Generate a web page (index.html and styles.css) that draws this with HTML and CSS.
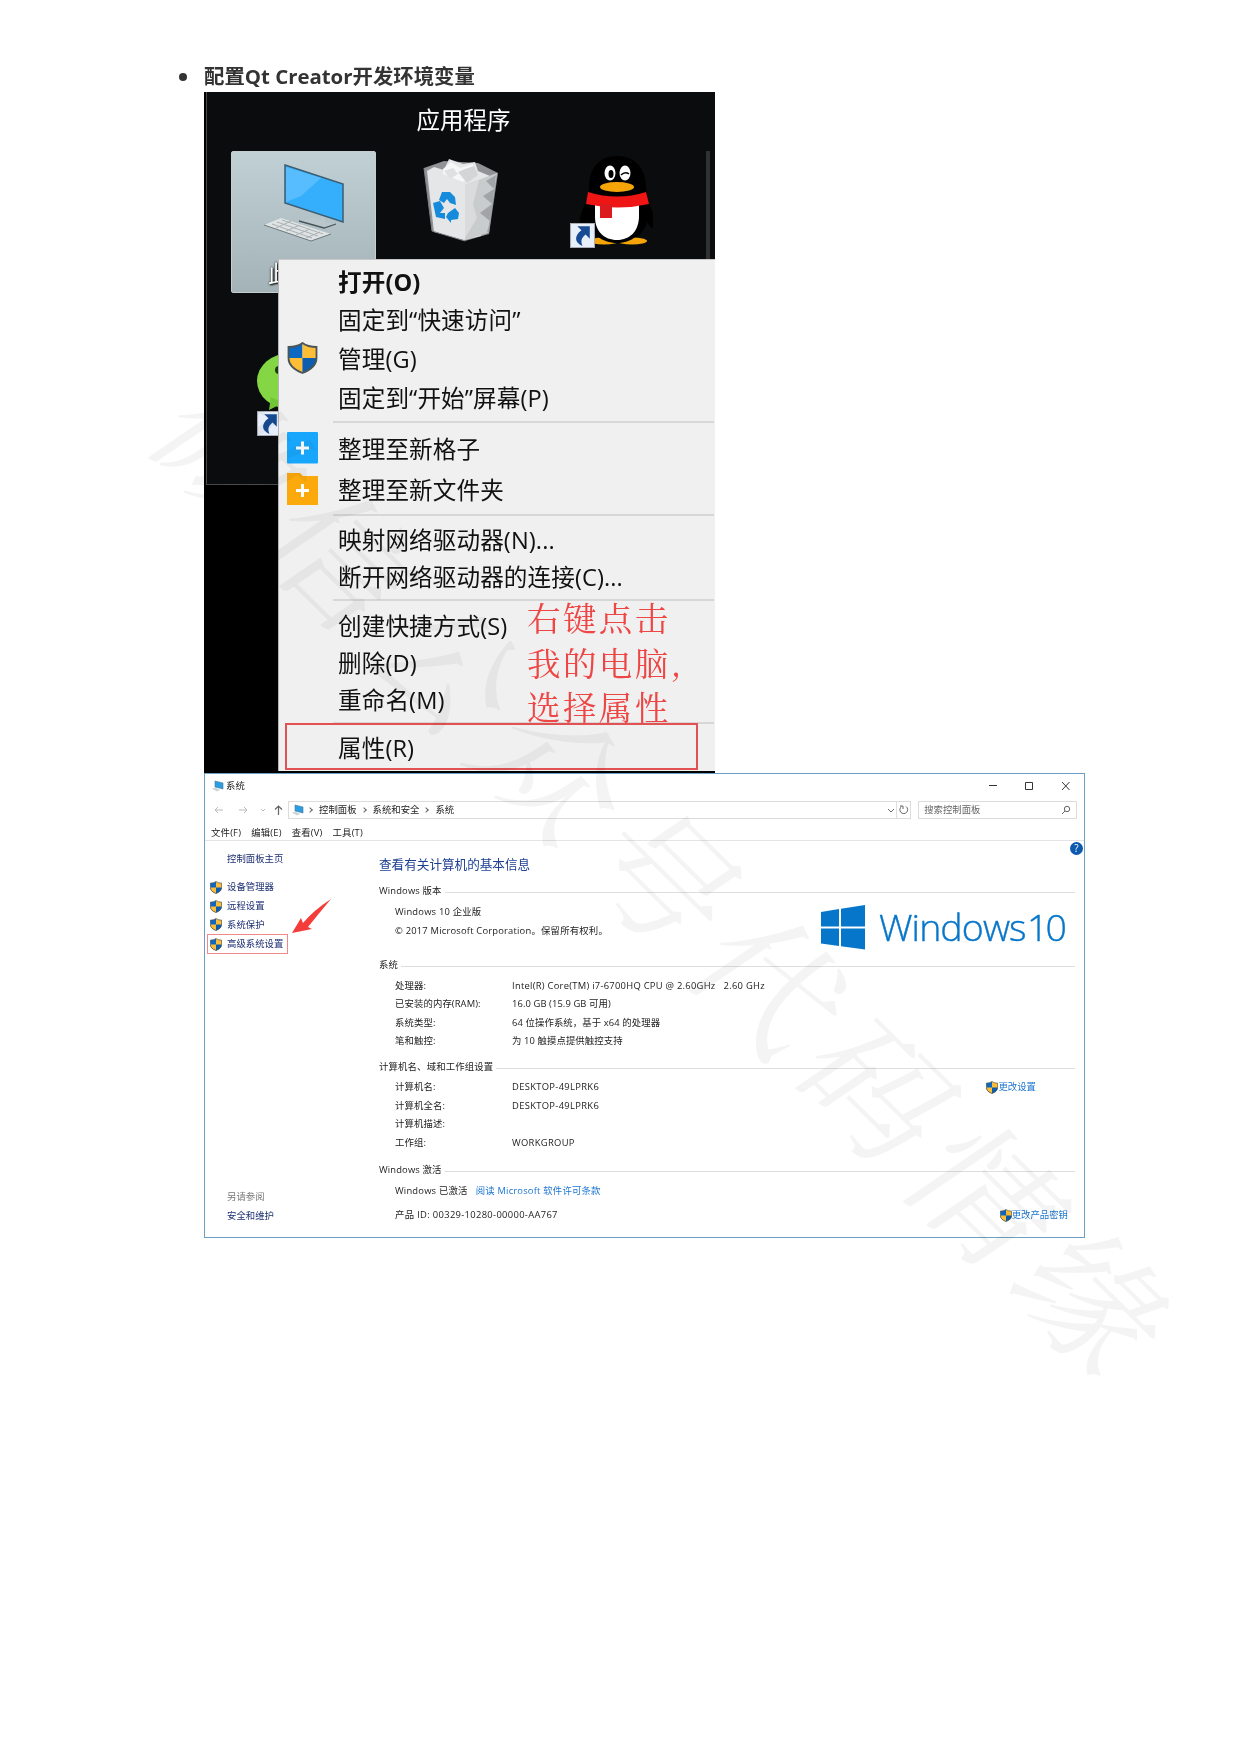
FILE: index.html
```html
<!DOCTYPE html>
<html lang="zh-CN">
<head>
<meta charset="utf-8">
<title>配置Qt Creator开发环境变量</title>
<link rel="stylesheet" href="styles.css">
</head>
<body>
<svg width="0" height="0" class="defs">
  <symbol id="shield" viewBox="0 0 30 32">
    <path d="M15 1C11 4 6 5 1 5v11c0 8 6 12 14 15z" fill="#0c68c0"/>
    <path d="M15 1c4 3 9 4 14 4v11c0 8-6 12-14 15z" fill="#fdbd36"/>
    <path d="M1 16h14v15C7 28 1 24 1 16z" fill="#fdbd36"/>
    <path d="M15 16h14c0 8-6 12-14 15z" fill="#0c5db0"/>
    <path d="M15 1C11 4 6 5 1 5v11c0 8 6 12 14 15 8-3 14-7 14-15V5c-5 0-10-1-14-4z" fill="none" stroke="#4b5557" stroke-width="1.8"/>
  </symbol>
  <symbol id="shortcut" viewBox="0 0 24 24">
    <path d="M0 0h24v24H0z" fill="#e9effa"/><path d="M.5.5h23v23H.5z" fill="none" stroke="#a9adb5"/>
    <path d="M7 3h12v12l-4-4c-4 3-5 6-3 11-8-3-8-10-1-15z" fill="#174b94"/>
  </symbol>
  <symbol id="pc" viewBox="0 0 12 12">
    <path d="M3 1l8 2v6L3 7z" fill="#2c9de0" stroke="#447b9d" stroke-width=".6"/><path d="M0 8.5l3-1 5 2.5-3 1.5z" fill="#c9d3d8"/>
  </symbol>
</svg>

<main class="page">
  <h1 class="heading"><span class="dot"></span>配置Qt Creator开发环境变量</h1>

  <section class="desktop">
    <div class="fence"><div class="fence-title">应用程序</div></div>
    <div class="tile"><span class="tile-name">此电脑</span></div>
    <svg class="item computer" viewBox="0 0 82 82" width="82" height="82">
      <path d="M21 3l58 19v38L21 41z" fill="#35aefb" stroke="#3c5d72" stroke-width="1.5"/>
      <path d="M22 5l35 11-20 18-15 6z" fill="#58bdff"/>
      <path d="M57 55l4 1v4l11 2-12 4-25-7 15-3 7 2z" fill="#b9c7cb"/><path d="M35 59l25 7 12-4" stroke="#48545a" stroke-width="1.3" fill="none"/>
      <path d="M0 63l17-7 50 16-20 7z" fill="#dfe3e4"/><path d="M0 63l47 16 20-7" stroke="#6d797e" fill="none"/>
      <path d="M8 62l40 14M13 60l41 14M18 58l41 14M12 66l15-7M22 69l14-6M32 73l14-6M42 76l14-6" stroke="#a9b1b4" fill="none"/>
    </svg>
    <svg class="item bin" viewBox="0 0 76 84" width="76" height="84">
      <path d="M1 10l20-7 34 2 20 10-9 61-24 7-33-10z" fill="#8f9396"/>
      <path d="M4 13l7-4 10 3 5-11 14 5 12-2 3 9 12 5-9 60-17 4-30-8z" fill="#e5e6e7"/>
      <path d="M20 11l8-7 9 6 13-4 3 10-13 8-20-8z" fill="#f7f7f7"/>
      <path d="M35 14l9 11 11-8-4-9-9 3z" fill="#d3d5d7"/><path d="M21 13l6 8 8-5-5-6z" fill="#dfe0e2"/>
      <path d="M42 27l32-12-9 60-23 7z" fill="#c9cccd"/>
      <path d="M73 17l-10 6 8 8-11 7 9 8-12 9 10 8-3 11 2 1z" fill="#a1a5a8"/>
      <path d="M42 27l14-5-6 24 4 14-12 20z" fill="#d9dbdc"/>
      <path d="M1 10l8 63 33 10" stroke="#7f8386" fill="none"/>
      <path d="M16 42l3-8h8l5 5 1 8-6-2-3-4-3 4zM10 45l7-2 4 7-4 5h5v6l-9-2zM25 55l7-5 4 5-1 6-7 1v3l-5-6z" fill="#168bdb"/>
    </svg>
    <svg class="item penguin" viewBox="0 0 86 94" width="86" height="94">
      <path d="M22 33C22 12 33 1 50 1s29 11 29 32l1 12c6 10 9 20 7 28-3 0-5-2-7-6-4 14-14 20-29 20S25 81 20 66c-2 5-4 6-7 5-1-9 2-18 8-26z" fill="#000"/>
      <ellipse cx="37" cy="86" rx="15" ry="3.500" fill="#f6a509"/><ellipse cx="65" cy="86" rx="15" ry="3.500" fill="#f6a509"/>
      <path d="M22 60c0 19 13 28 28 28s27-9 27-27V45H22z" fill="#000"/>
      <path d="M28 49h44v12c0 15-9 24-22 24S28 76 28 62z" fill="#fff"/>
      <ellipse cx="43" cy="18" rx="5.500" ry="7.500" fill="#fff"/><ellipse cx="58" cy="18" rx="5.500" ry="7.500" fill="#fff"/>
      <ellipse cx="44" cy="19" rx="2.500" ry="4"/><path d="M54 20q4-4 8-1" stroke="#000" stroke-width="1.500" fill="none"/>
      <ellipse cx="50" cy="32" rx="17" ry="5" fill="#f6a509"/>
      <path d="M21 37q29 9 58 0l3 12q-31 7-63 0z" fill="#f01515"/><path d="M33 49h12v14H33z" fill="#dc1b1f"/>
    </svg>
    <svg class="item arrow-qq" width="25" height="25"><use href="#shortcut"/></svg>
    <svg class="item wechat" viewBox="0 0 60 60" width="60" height="60"><ellipse cx="33" cy="28" rx="33" ry="28" fill="#84d644"/><path d="M14 44l-2 13 14-7z" fill="#70c634"/><circle cx="22" cy="17" r="4" fill="#1b3b08"/></svg>
    <svg class="item arrow-wx" width="25" height="25"><use href="#shortcut"/></svg>
    <div class="scroll"></div>

    <div class="menu">
      <div class="mi open">打开(O)</div>
      <div class="mi a">固定到“快速访问”</div>
      <div class="mi a"><svg class="mico" width="31" height="32"><use href="#shield"/></svg>管理(G)</div>
      <div class="mi a">固定到“开始”屏幕(P)</div>
      <hr class="s1">
      <div class="mi b"><svg class="mico" width="31" height="32" viewBox="0 0 31 32"><rect width="31" height="31.5" rx="1" fill="#18a6fc"/><path d="M9 16h13M15.500 9.500v13" stroke="#fff" stroke-width="3"/></svg>整理至新格子</div>
      <div class="mi b"><svg class="mico" width="31" height="32" viewBox="0 0 31 32"><path d="M0 0h13l3 3h15v29H0z" fill="#fca90b"/><path d="M9 17.500h13M15.500 11v13" stroke="#fff" stroke-width="3"/></svg>整理至新文件夹</div>
      <hr class="s2">
      <div class="mi c">映射网络驱动器(N)...</div>
      <div class="mi c">断开网络驱动器的连接(C)...</div>
      <hr class="s3">
      <div class="mi c">创建快捷方式(S)</div>
      <div class="mi c">删除(D)</div>
      <div class="mi c">重命名(M)</div>
      <hr class="s4">
      <div class="mi last">属性(R)</div>
      <div class="frame"></div>
      <div class="note">右键点击<br>我的电脑,<br>选择属性</div>
    </div>
  </section>

  <section class="window">
    <header class="titlebar">
      <svg width="12" height="12"><use href="#pc"/></svg><span>系统</span>
      <svg class="controls" width="81" height="12" viewBox="0 0 81 12" fill="none" stroke="#333"><path d="M0 5.500h8M36.500 2.500h7v7h-7zM73 2l7.500 8M80.500 2L73 10"/></svg>
    </header>
    <div class="nav">
      <svg class="navico" width="75" height="12" viewBox="0 0 75 12" fill="none"><path d="M10 6H2M5 3L2 6l3 3M26 6h8M31 3l3 3-3 3M48 5l2 2 2-2" stroke="#bbb"/><path d="M65.500 11V2M62 5.500L65.500 2 69 5.500" stroke="#666" stroke-width="1.200"/></svg>
      <div class="address"><svg width="12" height="12"><use href="#pc"/></svg><i></i><span>控制面板</span><i></i><span>系统和安全</span><i></i><span>系统</span>
        <svg class="addr-end" width="26" height="16" viewBox="0 0 26 16" fill="none" stroke="#666"><path d="M4 7l3 3 3-3"/><path d="M12.500 0v16" stroke="#ddd"/><path d="M22 4.500a3.900 3.900 0 1 1-4.500 0M16 4h3v3"/></svg></div>
      <div class="search"><span>搜索控制面板</span><svg width="10" height="10" viewBox="0 0 10 10" fill="none" stroke="#666"><circle cx="6" cy="4" r="2.700"/><path d="M4 6L1 9"/></svg></div>
    </div>
    <div class="menubar"><span>文件(F)</span><span>编辑(E)</span><span>查看(V)</span><span>工具(T)</span></div>
    <div class="body">
      <aside class="side">
        <div class="home">控制面板主页</div>
        <div class="task"><svg width="12" height="13"><use href="#shield"/></svg>设备管理器</div>
        <div class="task"><svg width="12" height="13"><use href="#shield"/></svg>远程设置</div>
        <div class="task"><svg width="12" height="13"><use href="#shield"/></svg>系统保护</div>
        <div class="task boxed"><svg width="12" height="13"><use href="#shield"/></svg>高级系统设置</div>
        <div class="also">另请参阅</div>
        <div class="security">安全和维护</div>
        <svg class="pointer" width="40" height="36" viewBox="0 0 40 36"><path d="M0 34L9 19l2 5Q22 11 39 0 28 13 16 28l4 2z" fill="#f43d3b"/></svg>
      </aside>
      <div class="info">
        <h2>查看有关计算机的基本信息</h2>
        <h3 class="g1">Windows 版本</h3>
        <div class="edition">
          <div><p>Windows 10 企业版</p><p>© 2017 Microsoft Corporation。保留所有权利。</p></div>
          <div class="logo"><svg width="44" height="45" viewBox="0 0 44 45"><path d="M0 7l18-3v17.500H0zM20 3.700L44 0v21.500H20zM0 23.500h18V41L0 38.500zM20 23.500h24V44.500L20 41.300z" fill="#0676ca"/></svg><span>Windows</span><span class="ten">10</span></div>
        </div>
        <h3 class="g2">系统</h3>
        <dl class="sys">
          <dt>处理器:</dt><dd class="cpu">Intel(R) Core(TM) i7-6700HQ CPU @ 2.60GHz&nbsp;&nbsp; 2.60 GHz</dd>
          <dt>已安装的内存(RAM):</dt><dd>16.0 GB (15.9 GB 可用)</dd>
          <dt>系统类型:</dt><dd>64 位操作系统，基于 x64 的处理器</dd>
          <dt>笔和触控:</dt><dd>为 10 触摸点提供触控支持</dd>
        </dl>
        <h3 class="g3">计算机名、域和工作组设置</h3>
        <dl class="names">
          <dt>计算机名:</dt><dd class="latin">DESKTOP-49LPRK6<a class="change"><svg width="12" height="13"><use href="#shield"/></svg>更改设置</a></dd>
          <dt>计算机全名:</dt><dd class="latin">DESKTOP-49LPRK6</dd>
          <dt>计算机描述:</dt><dd></dd>
          <dt>工作组:</dt><dd class="latin">WORKGROUP</dd>
        </dl>
        <h3 class="g4">Windows 激活</h3>
        <div class="act">Windows 已激活<a class="terms">阅读 Microsoft 软件许可条款</a></div>
        <div class="pid"><span class="latin">产品 ID: 00329-10280-00000-AA767</span><a class="key"><svg width="12" height="13"><use href="#shield"/></svg>更改产品密钥</a></div>
      </div>
      <div class="help">?</div>
    </div>
  </section>
  <div class="watermark">微信公众号代码情缘</div>
</main>
</body>
</html>
```
FILE: styles.css
```css
* { box-sizing: border-box; }
body { margin: 0; background: #fff; font-family: "Open Sans", "Noto Sans CJK SC", sans-serif; color: #222; }
.defs { position: absolute; }
svg { display: block; flex: none; }
.page { position: relative; width: 1239px; height: 1754px; padding: 61px 0 0 204px; overflow: hidden; }
.heading { position: relative; margin: 0; height: 31px; font-size: 20.4px; line-height: 31px; font-weight: 700; color: #333; white-space: nowrap; }
.dot { position: absolute; left: -25px; top: 12px; width: 8px; height: 8px; border-radius: 50%; background: #333; }

/* Desktop with context menu */
.desktop { position: relative; width: 511px; height: 681px; background: #000; overflow: hidden; }
.fence { margin-left: 2px; height: 393px; background: #0b0c0e; border: 1px solid #4a4b4c; border-width: 0 0 1px 1px; }
.fence-title { padding: 11px 0 0 5px; height: 34px; font-size: 23.5px; line-height: 34px; color: #fff; text-align: center; }
.tile { position: absolute; left: 27px; top: 59px; width: 145px; height: 142px; border-radius: 2px; border: 1px solid #c4ced1; background: linear-gradient(#c0d0d5, #a3b3b8); }
.tile-name { position: absolute; left: 36px; top: 104px; font-size: 23px; line-height: 34px; color: #fff; text-shadow: 1px 1px 2px #000, 0 0 2px #000; white-space: nowrap; }
.item { position: absolute; }
.computer { left: 60px; top: 70px; }
.bin { left: 219px; top: 66px; }
.penguin { left: 363px; top: 63px; }
.arrow-qq { left: 366px; top: 131px; }
.wechat { left: 53px; top: 261px; }
.arrow-wx { left: 53px; top: 319px; }
.scroll { position: absolute; right: 5px; top: 59px; width: 4px; height: 120px; background: #303132; }
.menu { position: absolute; left: 74px; top: 167px; width: 437px; height: 512px; padding-top: 2px; background: #f0f0f0; border-left: 1px solid #b5b5b5; border-top: 1px solid #c8c8c8; font-size: 23.6px; letter-spacing: .1px; color: #111; }
.mi { display: flex; align-items: center; position: relative; padding-left: 59px; white-space: nowrap; }
.mico { position: absolute; left: 8px; }
.open { height: 37px; font-weight: 700; }
.a { height: 39px; }
.b { height: 41px; }
.c { height: 37px; }
.last { height: 44px; }
.menu hr { margin: 0 1px 0 54px; border: 0; height: 2px; background: #d7d7d7; }
.menu .s1 { margin-top: 5px; margin-bottom: 4px; }
.menu .s2 { margin-top: 5px; margin-bottom: 4px; }
.menu .s3 { margin-top: 5px; margin-bottom: 5px; }
.menu .s4 { margin-top: 5px; margin-bottom: 1px; }
.frame { position: absolute; left: 6px; top: 463px; width: 413px; height: 47px; border: 2px solid #e35252; }
.note { position: absolute; left: 248px; top: 335px; font-family: "Noto Serif CJK SC", "Noto Sans CJK SC", serif; font-weight: 400; font-size: 33.5px; letter-spacing: 2.4px; line-height: 44.6px; color: #ee4545; white-space: nowrap; }

/* System window */
.window { width: 881px; height: 465px; border: 1px solid #6d9fc4; background: #fff; font-size: 9.4px; line-height: 18px; white-space: nowrap; }
.titlebar { display: flex; align-items: center; gap: 2px; height: 23px; padding: 0 14px 0 7px; }
.controls { margin-left: auto; }
.nav { display: flex; align-items: center; height: 25px; padding: 0 7px 0 8px; }
.address { display: flex; align-items: center; width: 624px; height: 18px; border: 1px solid #dcdcdc; padding: 0 0 0 3px; }
.address i { width: 4px; height: 4px; margin: 0 7px 0 4px; border: solid #666; border-width: 1px 1px 0 0; transform: rotate(45deg); }
.address span { margin-right: 1px; }
.addr-end { margin-left: auto; }
.search { display: flex; align-items: center; justify-content: space-between; width: 159px; height: 18px; margin-left: 7px; padding: 0 5px; border: 1px solid #dcdcdc; color: #666; }
.menubar { display: flex; gap: 10px; height: 19px; padding-left: 6px; line-height: 22px; letter-spacing: .2px; border-bottom: 1px solid #e4e4e4; }
.body { position: relative; display: flex; height: 396px; }
.side { position: relative; width: 174px; padding: 9px 0 0 2px; color: #1c2f72; }
.home { padding-left: 20px; margin-bottom: 10px; }
.task { display: flex; align-items: center; gap: 5px; height: 18.700px; padding-left: 3px; }
.boxed { width: 81px; height: 20px; border: 1px solid #f08a8a; padding-left: 2px; }
.also { margin-top: 234px; padding-left: 20px; color: #777; }
.security { padding: 1px 0 0 20px; }
.pointer { position: absolute; left: 87px; top: 58px; }
.info { width: 696px; }
.info h2 { margin: 0; padding-top: 13px; height: 41px; font-size: 12.6px; line-height: 22px; font-weight: 400; color: #1d3f91; }
.info h3 { display: flex; align-items: center; gap: 3px; margin: 0; height: 18px; font-size: inherit; font-weight: 400; letter-spacing: .15px; }
.info h3::after { content: ""; flex: 1; height: 1px; margin-top: 2px; background: #dedede; }
.info p { margin: 0; height: 19px; line-height: 19px; letter-spacing: .2px; }
.edition { display: flex; justify-content: space-between; padding: 2px 7px 0 16px; height: 56px; }
.logo { display: flex; width: 247px; margin-top: 3px; font-weight: 300; font-size: 37.5px; line-height: 43px; color: #0676ca; -webkit-text-stroke: .4px #0676ca; }
.logo span { width: 148px; margin-left: 14px; letter-spacing: -.9px; }
.logo .ten { width: 40px; margin-left: 0; letter-spacing: -3px; }
.info dl { display: grid; grid-template-columns: 117px 1fr; grid-auto-rows: 18.300px; margin: 0; padding-left: 16px; }
.info dt, .info dd { margin: 0; letter-spacing: .1px; }
.info dd { display: flex; align-items: flex-start; }
.info .cpu { letter-spacing: .27px; }
.info .latin { letter-spacing: .33px; }
.sys { padding-top: 3px; height: 84px; }
.names { padding-top: 2px; height: 85px; }
.names.names { grid-auto-rows: 18.700px; }
.info a { color: #1b74cf; }
.change, .key { display: flex; align-items: center; gap: 0; margin-left: auto; letter-spacing: 0; }
.change { margin-right: 39px; }
.act { padding-left: 16px; height: 24px; padding-top: 3px; letter-spacing: .2px; }
.terms { margin-left: 8px; }
.pid { display: flex; padding: 3px 7px 0 16px; }
.help { position: absolute; right: 1px; top: 1px; width: 13px; height: 13px; border-radius: 50%; background: #0c59ad; color: #fff; text-align: center; line-height: 13px; font-size: 10px; }

.watermark { position: absolute; left: 0; top: 0; width: 1359px; height: 160px; line-height: 160px; text-align: center; font-family: "Noto Serif CJK SC", "Noto Sans CJK SC", serif; font-weight: 400; font-size: 138px; letter-spacing: 13px; color: #f4f4f4; mix-blend-mode: multiply; white-space: nowrap; transform: translate(-4px, 798px) rotate(44.6deg) skewX(-11deg); }
```
